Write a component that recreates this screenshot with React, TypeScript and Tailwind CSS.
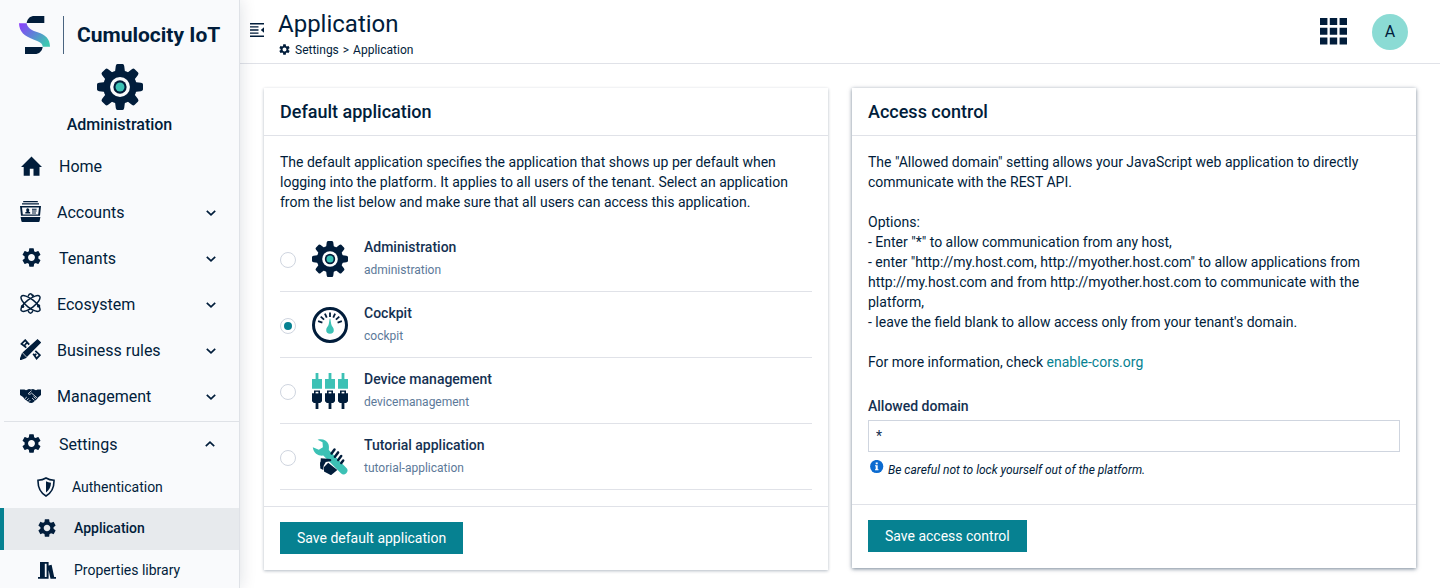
import { useState } from "react";
import type { ReactNode } from "react";
import { MdSettings } from "react-icons/md";

const NAVY = "#011d3b";
const TEAL = "#3cc1b5";

function BrandMark() {
  return (
    <svg viewBox="57 48 93 114" className="h-[38px] w-[31px]" aria-hidden="true">
      <defs>
        <linearGradient id="ribbon" x1="0" y1="0" x2="1" y2="0.7">
          <stop offset="0" stopColor="#8f3bff" />
          <stop offset="0.5" stopColor="#5f7fd8" />
          <stop offset="1" stopColor="#3fc6b2" />
        </linearGradient>
      </defs>
      <path d="M133 48v21H80c2-13 10-21 24-21z" fill={NAVY} />
      <path
        d="M57 70h23c2 14 14 21 33 27 24 8 37 20 37 43h-22c0-11-9-15-26-21C73 109 58 96 57 70z"
        fill="url(#ribbon)"
      />
      <path d="M75 162v-21h53c-2 13-10 21-24 21z" fill={NAVY} />
    </svg>
  );
}

function AdministrationIcon({ className, hub }: { className: string; hub: string }) {
  const angles = [0, 45, 90, 135, 180, 225, 270, 315];
  return (
    <svg viewBox="0 0 36 36" className={className} aria-hidden="true">
      <circle cx="18" cy="18" r="13.2" fill={NAVY} />
      {angles.map((a) => (
        <path
          key={a}
          d="M14 7l.7-5.400Q14.900 0 16 0h4q1.100 0 1.300 1.600L22 7z"
          fill={NAVY}
          transform={`rotate(${a} 18 18)`}
        />
      ))}
      <circle cx="18" cy="18" r="7.8" fill={hub} />
      <circle cx="18" cy="18" r="5.2" fill={NAVY} />
      <circle cx="18" cy="18" r="3.5" fill={TEAL} />
    </svg>
  );
}

function CockpitIcon() {
  const ticks = [-72, -48, -24, 0, 24, 48, 72];
  return (
    <svg viewBox="0 0 36 36" className="size-9" aria-hidden="true">
      <circle cx="18" cy="18" r="16.5" fill="none" stroke={NAVY} strokeWidth="3" />
      {ticks.map((a) => (
        <path key={a} d="M18 5.500v4.500" stroke={NAVY} strokeWidth="1.800" transform={`rotate(${a} 18 18)`} />
      ))}
      <path
        d="M18 11.500c.5 0 .6 2 1.200 5.500.5 2.500 2.600 3.400 2.600 6a3.800 3.800 0 0 1-7.600 0c0-2.600 2.100-3.500 2.600-6 .6-3.500.7-5.500 1.200-5.500z"
        fill={TEAL}
      />
    </svg>
  );
}

function DeviceManagementIcon() {
  return (
    <svg viewBox="0 0 36 36" className="size-9" aria-hidden="true">
      {[0, 13, 26].map((x) => (
        <g key={x} transform={`translate(${x} 0)`}>
          <path d="M3.600 0h2.800v6H10v9.800H0V6h3.600z" fill={TEAL} />
          <path d="M2 17.600h6v2.600h2v8L8.200 30H6.400v6H3.600v-6H1.800L0 28.200v-8h2z" fill={NAVY} />
          <path d="M3.600 18.800h2.800v1.600H3.600z" fill="#fff" />
        </g>
      ))}
    </svg>
  );
}

function TutorialIcon() {
  return (
    <svg viewBox="0 0 36 36" className="size-9" aria-hidden="true">
      <path
        d="M.8 8.200L6.800 10.700 10.900 8.200 10.500 3.200 5.600.7C10-.6 14.800 1 16.400 4.900c.8 2 .5 4.300.4 6L34.200 28.800a3.700 3.700 0 0 1-5.300 5.500L11.300 16.600C7 17.300 1.500 14.500.8 8.200z"
        fill={TEAL}
      />
      <path
        d="M19.600 14.400L22.500 10.500M22.900 17.700l3.200-4.300M26.200 20.900l3-3.900M29.300 24l1.900-2.500"
        stroke={NAVY}
        strokeWidth="2.500"
        strokeLinecap="round"
      />
      <path d="M8.800 19.300l9.500.6c1.400.2 1.300 2.300-.1 2.400l-4.400.6-3 5.400-2.400-1.500z" fill={NAVY} />
      <path d="M8 22.500L11.500 27l-.2 4-3-1.500z" fill={NAVY} />
      <path d="M16.200 23.700l9.100 7.300-6.300 5.200-7-3.600-.2-4.400z" fill={NAVY} />
    </svg>
  );
}

function HomeIcon() {
  return (
    <svg viewBox="0 0 21 20" className="h-5 w-[21px]" aria-hidden="true">
      <path d="M10.500.5L21 11h-2.500v8.700h-6v-7h-3.700v7H2.700V11H0z" fill="currentColor" />
    </svg>
  );
}

function AccountsIcon() {
  return (
    <svg viewBox="0 0 21 21" className="size-[21px]" fill="currentColor" aria-hidden="true">
      <path d="M3.200 0h14.600v1.200H3.200zM2 2.300h17v1.300H2z" />
      <path fillRule="evenodd" d="M0 5h21l-1 9.700H1zM2 6.500l.8 6.900h15.400l.8-6.900z" />
      <path d="M7.800 7.200a1.700 1.800 0 0 1 .9 3.200l1.500.9v1.200H5.300v-1.200l1.500-.9a1.700 1.800 0 0 1 1-3.200zM12 7.700h4.600v1H12zM12 9.600h4.600v1H12zM12 11.400h4v1h-4zM.6 16h19.800l-.8 4.200q-.2.800-1 .8H2.400q-.8 0-1-.8z" />
    </svg>
  );
}

function EcosystemIcon() {
  return (
    <svg viewBox="0 0 21 21" className="size-[21px]" aria-hidden="true">
      <g fill="none" stroke="currentColor" strokeWidth="1.500">
        <ellipse cx="10.500" cy="10.500" rx="11.600" ry="4.200" transform="rotate(38 10.500 10.500)" />
        <ellipse cx="10.500" cy="10.500" rx="11.600" ry="4.200" transform="rotate(-38 10.500 10.500)" />
        <path d="M8 3.500C8.700 1.700 9.500.8 10.500.8S12.300 1.700 13 3.500M8 17.500c.7 1.800 1.500 2.700 2.500 2.700s1.800-.9 2.500-2.700" />
      </g>
      <circle cx="2.600" cy="13.400" r="1.700" fill="currentColor" />
      <circle cx="18.600" cy="12.900" r="1.700" fill="currentColor" />
      <circle cx="12.800" cy="2.600" r="1.200" fill="currentColor" />
    </svg>
  );
}

function RulesIcon() {
  return (
    <svg viewBox="0 0 21 21" className="size-[21px]" aria-hidden="true">
      <g fill="none" stroke="currentColor" strokeWidth="1.800">
        <path d="M6.300 8.600L1.500 4.900 5.200 1.200l4 4.500M5.500 5.200l1.700-1.500M4 6.900l1.700-1.500M13.200 14.800l3.400 4.700 3.300-3.300-4.600-4.300M14.500 16.500l1.800-1.700" />
      </g>
      <path
        d="M17.600.8l2.700 2.700L6.900 17.200l-3.500-3.600zM2.300 14.900l3.500 3.600L0 20.800z"
        fill="currentColor"
        stroke="currentColor"
        strokeWidth="1.200"
      />
    </svg>
  );
}

function HandshakeIcon() {
  return (
    <svg viewBox="0 0 21 14" className="h-[14px] w-[21px]" aria-hidden="true">
      <path
        d="M0 .5h4.500l1.500.8L9 0l2 .6L13 0l3 1.200L17.500.5H21v5.500l-3 2.500-1 1.500-4 3.500-1.500.5-2-.3L5 10.500 3 8 0 6z"
        fill="currentColor"
      />
      <path
        d="M11.500 1.700L8.200 4.700c.8 1 2.300.7 3.300-.6L17 8.800M5 9.700l1.800-1.700M6.800 11.300l1.900-1.900M8.800 12.700l1.600-1.700M12 9l2.500 2.300M13.500 7.500l2.500 2.300"
        fill="none"
        stroke="#f9fafc"
        strokeWidth=".8"
      />
    </svg>
  );
}

function ShieldIcon() {
  return (
    <svg viewBox="0 0 18 20" className="h-5 w-[18px]" aria-hidden="true">
      <path
        d="M9 1c2.400 1.400 5 2.100 8 2.300.2 7-2.200 12.500-8 15.700C3.200 15.800.8 10.300 1 3.300 4 3.100 6.600 2.400 9 1z"
        fill="none"
        stroke="currentColor"
        strokeWidth="1.600"
      />
      <path d="M9 4.300c1.600.9 3.200 1.300 5 1.500-.1 4.200-1.700 7.400-5 9.700z" fill="currentColor" />
    </svg>
  );
}

function LibraryIcon() {
  return (
    <svg viewBox="0 0 18 17" className="h-[17px] w-[18px]" fill="currentColor" aria-hidden="true">
      <path
        fillRule="evenodd"
        d="M2 0h8.600v3.500l3-.7 2.600 12.200H18v1.800h-5.500L10.600 8v8.800H0V15h2zM6.800 1.800V15h1.800V1.800z"
      />
    </svg>
  );
}

function Chevron({ open }: { open: boolean }) {
  return (
    <svg viewBox="0 0 10 6" className="h-[6px] w-[10px]" aria-hidden="true">
      <path
        d={open ? "M.8 5.200L5 1.200l4.200 4" : "M.8.8L5 4.800 9.200.8"}
        fill="none"
        stroke="currentColor"
        strokeWidth="1.700"
      />
    </svg>
  );
}

const topItems: { label: string; icon: ReactNode; box: string; expandable: boolean }[] = [
  { label: "Home", icon: <HomeIcon />, box: "w-6", expandable: false },
  { label: "Accounts", icon: <AccountsIcon />, box: "w-[22px]", expandable: true },
  { label: "Tenants", icon: <MdSettings size={23} />, box: "w-6", expandable: true },
  { label: "Ecosystem", icon: <EcosystemIcon />, box: "w-[22px]", expandable: true },
  { label: "Business rules", icon: <RulesIcon />, box: "w-[22px]", expandable: true },
  { label: "Management", icon: <HandshakeIcon />, box: "w-[22px]", expandable: true },
];

function Sidebar() {
  return (
    <aside className="z-10 flex h-screen w-60 shrink-0 flex-col overflow-y-auto border-r border-[#dfe2e7] bg-[#f9fafc] shadow-[0_0_16px_rgba(1,29,59,0.14)] [scrollbar-width:none]">
      <div className="flex items-center pt-4 pl-[19px]">
        <BrandMark />
        <span className="ml-[13px] h-[38px] w-px bg-[#4a6480]" />
        <span className="ml-[13px] text-[21px] leading-7 font-bold whitespace-nowrap">Cumulocity IoT</span>
      </div>
      <div className="flex flex-col items-center pt-[10px] pb-2">
        <AdministrationIcon className="size-[46px]" hub="#f9fafc" />
        <span className="mt-1 text-base leading-[22px] font-medium">Administration</span>
      </div>
      <nav aria-label="Main">
        <ul>
          {topItems.map((item) => (
            <li key={item.label}>
              <a href="#" className="flex h-[46px] items-center gap-4 pr-[23px] pl-[19px] text-base">
                <span className={`flex shrink-0 items-center justify-center pb-[3px] ${item.box}`}>{item.icon}</span>
                <span className="flex-1">{item.label}</span>
                {item.expandable && <Chevron open={false} />}
              </a>
            </li>
          ))}
          <li className="mt-px ml-1 border-t border-[#dfe2e7]">
            <a href="#" className="flex h-11 items-center gap-4 pt-0.5 pr-6 pl-[15px] text-base">
              <span className="flex w-6 shrink-0 items-center justify-center pb-1">
                <MdSettings size={23} />
              </span>
              <span className="flex-1">Settings</span>
              <span className="pb-[3px]">
                <Chevron open />
              </span>
            </a>
          </li>
        </ul>
        <ul className="text-sm">
          <li>
            <a href="#" className="flex h-[42px] items-center gap-[17px] pl-[37px]">
              <ShieldIcon />
              Authentication
            </a>
          </li>
          <li>
            <a
              href="#"
              aria-current="page"
              className="flex h-[42px] items-center gap-4 border-l-4 border-[#068191] bg-[#e7eaed] pb-0.5 pl-8 font-medium"
            >
              <MdSettings size={22} />
              Application
            </a>
          </li>
          <li>
            <a href="#" className="flex h-[42px] items-center gap-[18px] pb-0.5 pl-[38px]">
              <LibraryIcon />
              Properties library
            </a>
          </li>
        </ul>
      </nav>
    </aside>
  );
}

function Header() {
  return (
    <header className="flex h-16 shrink-0 items-center border-b border-[#e0e2e8] pr-8 pl-[10px]">
      <button type="button" aria-label="Toggle navigation" className="mb-1">
        <svg viewBox="0 0 14 14" className="size-[14px]" aria-hidden="true">
          <path
            d="M0 .8h14M0 3.900h8.500M0 7h8.500M0 10.100h8.500M0 13.200h14"
            stroke="currentColor"
            strokeWidth="1.400"
          />
          <path d="M14 4.200v5.600L10.800 7z" fill="currentColor" />
        </svg>
      </button>
      <div className="ml-[14px] flex-1 pt-2 pb-1">
        <h1 className="text-2xl leading-8">Application</h1>
        <nav aria-label="Breadcrumb" className="flex items-center gap-1 text-xs leading-5">
          <MdSettings size={13} />
          <a href="#">Settings</a>
          <span>&gt;</span>
          <span>Application</span>
        </nav>
      </div>
      <button type="button" aria-label="Applications" className="mr-[25px]">
        <svg viewBox="0 0 27 27" className="size-[27px]" fill="currentColor" aria-hidden="true">
          {[0, 9.7, 19.4].map((y) => (
            <path key={y} d={`M0 ${y}h7.400v7H0zM9.800 ${y}h7.400v7H9.800zM19.600 ${y}h7.400v7h-7.400z`} />
          ))}
        </svg>
      </button>
      <button type="button" aria-label="User menu" className="size-9 rounded-full bg-[#8bdbd4] text-base">
        A
      </button>
    </header>
  );
}

const applications: { name: string; path: string; icon: ReactNode }[] = [
  { name: "Administration", path: "administration", icon: <AdministrationIcon className="size-9" hub="#fff" /> },
  { name: "Cockpit", path: "cockpit", icon: <CockpitIcon /> },
  { name: "Device management", path: "devicemanagement", icon: <DeviceManagementIcon /> },
  { name: "Tutorial application", path: "tutorial-application", icon: <TutorialIcon /> },
];

function DefaultApplicationCard() {
  const [selected, setSelected] = useState("cockpit");
  return (
    <section className="bg-white shadow-[0_1px_3px_rgba(1,29,59,0.3)]">
      <h2 className="border-b border-[#e0e2e8] px-4 py-[10px] text-lg leading-[27px] font-medium">
        Default application
      </h2>
      <div className="px-4 py-4">
        <p className="text-sm">
          The default application specifies the application that shows up per default when logging into the platform. It
          applies to all users of the tenant. Select an application from the list below and make sure that all users can
          access this application.
        </p>
        <ul className="mt-[14px]">
          {applications.map((app) => (
            <li key={app.path} className="border-b border-[#e0e2e8]">
              <label className="flex h-[65px] items-center gap-4">
                <input
                  type="radio"
                  name="default-application"
                  checked={selected === app.path}
                  onChange={() => setSelected(app.path)}
                  className="mt-[3px] size-4 appearance-none rounded-full border border-[#cfd5df] bg-clip-content p-[3px] checked:bg-[#068191]"
                />
                {app.icon}
                <span className="flex flex-col gap-[3px]">
                  <span className="text-sm font-medium text-[#153152]">{app.name}</span>
                  <span className="text-xs leading-5 text-[#5c7999]">{app.path}</span>
                </span>
              </label>
            </li>
          ))}
        </ul>
      </div>
      <footer className="border-t border-[#e0e2e8] px-4 pt-[15px] pb-4">
        <button type="button" className="h-8 bg-[#068191] px-[17px] text-sm text-white">
          Save default application
        </button>
      </footer>
    </section>
  );
}

function AccessControlCard() {
  const [domain, setDomain] = useState("*");
  return (
    <section className="bg-white shadow-[0_1px_4px_rgba(1,29,59,0.55)]">
      <h2 className="border-b border-[#e0e2e8] px-4 py-[10px] text-lg leading-[27px] font-medium">Access control</h2>
      <div className="px-4 pt-4 pb-6 text-sm">
        <p>
          The "Allowed domain" setting allows your JavaScript web application to directly communicate with the REST API.
        </p>
        <p className="mt-5">
          Options:
          <br />- Enter "*" to allow communication from any host,
          <br />- enter "http://my.host.com, http://myother.host.com" to allow applications from http://my.host.com and
          from http://myother.host.com to communicate with the platform,
          <br />- leave the field blank to allow access only from your tenant's domain.
        </p>
        <p className="mt-5">
          For more information, check{" "}
          <a href="https://enable-cors.org" className="text-[#068191]">
            enable-cors.org
          </a>
        </p>
        <label htmlFor="allowed-domain" className="mt-6 block font-medium text-[#153152]">
          Allowed domain
        </label>
        <input
          id="allowed-domain"
          type="text"
          value={domain}
          onChange={(e) => setDomain(e.target.value)}
          className="mt-1 block h-8 w-full border border-[#cfd5df] px-[7px] text-[#153152] outline-none"
        />
        <div className="mt-2 flex gap-1 pl-0.5">
          <svg viewBox="0 0 14 14" className="size-[14px]" aria-hidden="true">
            <circle cx="6.700" cy="6.500" r="6.600" fill="#0b6bd0" />
            <path d="M5.700 2.600h2v1.700h-2zM5 5.200h2.700v4h.8v1.100H5V9.200h.7V6.300H5z" fill="#fff" />
          </svg>
          <em className="text-xs leading-5">Be careful not to lock yourself out of the platform.</em>
        </div>
      </div>
      <footer className="border-t border-[#e0e2e8] px-4 pt-[15px] pb-4">
        <button type="button" className="h-8 bg-[#068191] px-[17px] text-sm text-white">
          Save access control
        </button>
      </footer>
    </section>
  );
}

export default function App() {
  return (
    <div className="flex h-screen bg-white font-[Roboto,sans-serif] text-[#011d3b]">
      <Sidebar />
      <div className="flex min-w-0 flex-1 flex-col">
        <Header />
        <main className="grid flex-1 grid-cols-1 items-start gap-6 overflow-y-auto px-6 pt-6 md:grid-cols-2">
          <DefaultApplicationCard />
          <AccessControlCard />
        </main>
      </div>
    </div>
  );
}
